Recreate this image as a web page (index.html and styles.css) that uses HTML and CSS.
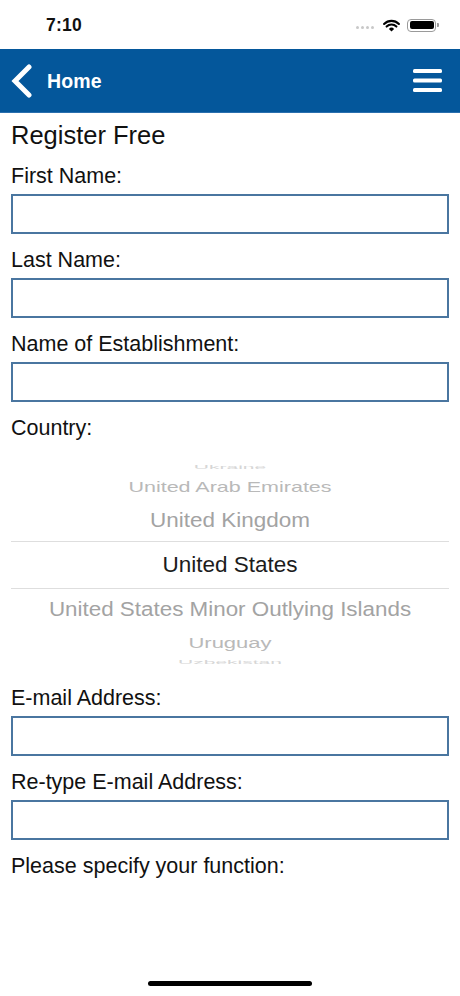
FILE: index.html
```html
<!DOCTYPE html>
<html lang="en">
<head>
<meta charset="utf-8">
<title>Register Free</title>
<link rel="stylesheet" href="styles.css">
</head>
<body>
<div class="screen">
  <div class="status">
    <span class="time">7:10</span>
    <div class="status-icons">
      <span class="signal"><i></i><i></i><i></i><i></i></span>
      <svg class="wifi" width="17" height="13" viewBox="0 0 17 13">
        <path d="M8.5 12.6 L5.9 9.9 A3.7 3.7 0 0 1 11.1 9.9 Z" fill="#000"/>
        <path d="M3.6 7.6 A6.9 6.9 0 0 1 13.4 7.6" stroke="#000" stroke-width="2.1" fill="none" stroke-linecap="round"/>
        <path d="M1.1 4.9 A10.5 10.5 0 0 1 15.9 4.9" stroke="#000" stroke-width="2.1" fill="none" stroke-linecap="round"/>
      </svg>
      <span class="battery"><span class="battery-fill"></span></span>
      <span class="battery-cap"></span>
    </div>
  </div>

  <header class="nav">
    <div class="nav-left">
      <svg class="back" width="24" height="34" viewBox="0 0 24 34">
        <polyline points="19,3 5,17 19,31" fill="none" stroke="#fff" stroke-width="5" stroke-linecap="round" stroke-linejoin="miter"/>
      </svg>
      <span class="nav-title">Home</span>
    </div>
    <svg class="menu" width="30" height="24" viewBox="0 0 30 24">
      <rect x="0" y="0" width="29" height="4" rx="1.5" fill="#fff"/>
      <rect x="0" y="9.5" width="29" height="4" rx="1.5" fill="#fff"/>
      <rect x="0" y="19" width="29" height="4" rx="1.5" fill="#fff"/>
    </svg>
  </header>

  <main class="form">
    <h1 class="title">Register Free</h1>

    <label class="label">First Name:</label>
    <div class="input"></div>

    <label class="label">Last Name:</label>
    <div class="input"></div>

    <label class="label">Name of Establishment:</label>
    <div class="input"></div>

    <label class="label">Country:</label>
    <div class="picker">
      <div class="row r-far-top"><span>Ukraine</span></div>
      <div class="row r-mid-top"><span>United Arab Emirates</span></div>
      <div class="row r-near-top"><span>United Kingdom</span></div>
      <div class="row r-selected"><span>United States</span></div>
      <div class="row r-near-bottom"><span>United States Minor Outlying Islands</span></div>
      <div class="row r-mid-bottom"><span>Uruguay</span></div>
      <div class="row r-far-bottom"><span>Uzbekistan</span></div>
    </div>

    <label class="label">E-mail Address:</label>
    <div class="input"></div>

    <label class="label">Re-type E-mail Address:</label>
    <div class="input"></div>

    <label class="label">Please specify your function:</label>
  </main>

  <div class="home-indicator"></div>
</div>
</body>
</html>
```

FILE: styles.css
```css
* { box-sizing: border-box; }

html, body {
  margin: 0;
  padding: 0;
  background: #fff;
}

body {
  font-family: "Liberation Sans", Arial, sans-serif;
  color: #111;
}

.screen {
  width: 460px;
  height: 996px;
  display: flex;
  flex-direction: column;
  overflow: hidden;
}

/* status bar */
.status {
  height: 49px;
  flex: 0 0 49px;
  display: flex;
  align-items: center;
  justify-content: space-between;
  padding: 0 21px 0 46px;
}

.time {
  font-size: 17.5px;
  font-weight: bold;
  letter-spacing: 0.2px;
  margin-top: 2px;
}

.status-icons {
  display: flex;
  align-items: center;
  margin-top: 1px;
}

.signal {
  display: flex;
  gap: 2px;
  margin-right: 9px;
  margin-top: 4px;
}

.signal i {
  width: 3px;
  height: 3px;
  border-radius: 50%;
  background: #c8c8c8;
}

.wifi {
  margin-right: 7px;
}

.battery {
  width: 29px;
  height: 13px;
  border: 1px solid #9a9a9a;
  border-radius: 4px;
  padding: 1.5px;
  display: flex;
}

.battery-fill {
  flex: 1;
  background: #000;
  border-radius: 2px;
}

.battery-cap {
  width: 2px;
  height: 4px;
  background: #9a9a9a;
  border-radius: 0 1px 1px 0;
  margin-left: 1px;
}

/* nav bar */
.nav {
  height: 64px;
  flex: 0 0 64px;
  background: #04579b;
  border-bottom: 1px solid #2a6fae;
  display: flex;
  align-items: center;
  justify-content: space-between;
  padding: 0 17px 0 10px;
}

.nav-left {
  display: flex;
  align-items: center;
}

.back {
  margin-right: 13px;
  margin-top: 1px;
}

.nav-title {
  color: #fff;
  font-size: 19.5px;
  font-weight: bold;
  letter-spacing: 0.1px;
  margin-top: 2px;
}

.menu {
  margin-top: 1px;
}

/* form */
.form {
  display: flex;
  flex-direction: column;
  padding: 7px 11px 0 11px;
}

.title {
  margin: 0;
  font-size: 25.5px;
  font-weight: normal;
  line-height: 30px;
  color: #111;
}

.label {
  display: block;
  font-size: 21.5px;
  line-height: 24px;
  margin-top: 14px;
  color: #111;
}

.input {
  height: 40px;
  margin-top: 6px;
  border: 2px solid #4a76a0;
  background: #fff;
}

/* country picker */
.picker {
  display: flex;
  flex-direction: column;
  height: 232px;
  padding-top: 20px;
}

.row {
  display: flex;
  align-items: center;
  justify-content: center;
  white-space: nowrap;
  font-size: 22.5px;
}

.row span {
  display: block;
}

.r-far-top {
  height: 14px;
  color: #d6d6d6;
  font-size: 21px;
}
.r-far-top span { transform: scaleY(0.28); line-height: 14px; }

.r-mid-top {
  height: 27px;
  color: #b9b9b9;
  font-size: 21.5px;
}
.r-mid-top span { transform: scaleY(0.66); }

.r-near-top {
  height: 40px;
  color: #a3a3a3;
  font-size: 22.5px;
}
.r-near-top span { transform: scaleY(0.92); }

.r-selected {
  height: 48px;
  color: #1c1c1c;
  font-size: 22.5px;
  border-top: 1px solid #dedede;
  border-bottom: 1px solid #dedede;
}

.r-near-bottom {
  height: 39px;
  color: #a3a3a3;
  font-size: 22.4px;
}
.r-near-bottom span { transform: scaleY(0.93); }

.r-mid-bottom {
  height: 29px;
  color: #b9b9b9;
  font-size: 22px;
}
.r-mid-bottom span { transform: scaleY(0.66); }

.r-far-bottom {
  height: 10px;
  color: #d6d6d6;
  font-size: 21px;
}
.r-far-bottom span { transform: scaleY(0.28); line-height: 10px; }

/* home indicator */
.home-indicator {
  width: 164px;
  height: 5px;
  border-radius: 3px;
  background: #000;
  margin: auto auto 10px;
}
```
